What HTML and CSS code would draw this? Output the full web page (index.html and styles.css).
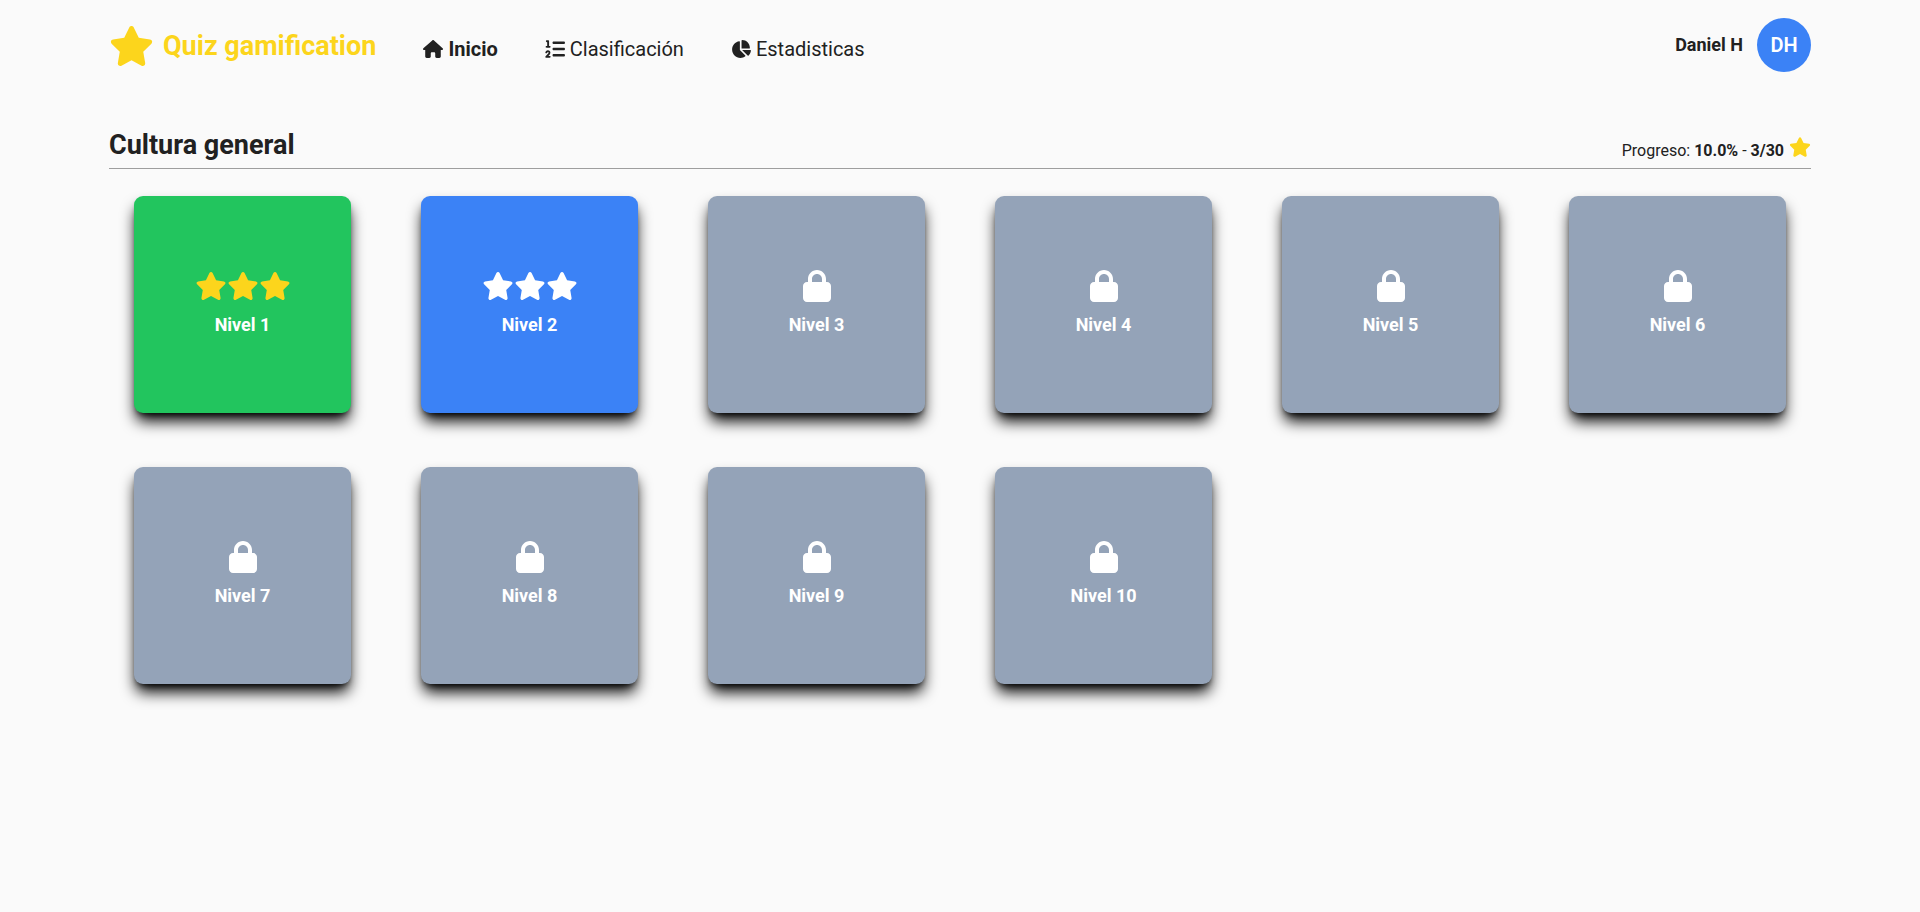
FILE: index.html
```html
<!DOCTYPE html>
<html lang="es">
<head>
  <meta charset="UTF-8">
  <meta name="viewport" content="width=device-width, initial-scale=1.0">
  <title>Quiz gamification</title>
  <link rel="stylesheet" href="styles.css">
</head>
<body>
  <!-- Shared icons -->
  <svg class="sprite" aria-hidden="true">
    <symbol id="star" viewBox="0 0 576 512">
      <path d="M316.9 18C311.6 7 300.4 0 288.100 0s-23.400 7-28.800 18L195 150.300 51.400 171.500c-12 1.800-22 10.200-25.700 21.700s-.700 24.200 7.900 32.700L137.800 329 113.200 474.700c-2 12 3 24.200 12.900 31.300s23 8 33.800 2.300l128.300-68.500 128.300 68.500c10.800 5.700 23.900 4.900 33.800-2.300s14.900-19.300 12.900-31.300L438.500 329 542.700 225.900c8.600-8.500 11.700-21.200 7.900-32.700s-13.700-19.900-25.700-21.700L381.200 150.300 316.900 18z"/>
    </symbol>
    <symbol id="lock" viewBox="0 0 448 512">
      <path d="M144 144v48H304V144c0-44.200-35.800-80-80-80s-80 35.800-80 80zM80 192V144C80 64.500 144.500 0 224 0s144 64.500 144 144v48h16c35.300 0 64 28.700 64 64V448c0 35.300-28.700 64-64 64H64c-35.300 0-64-28.700-64-64V256c0-35.300 28.700-64 64-64H80z"/>
    </symbol>
  </svg>

  <header class="navbar">
    <a href="#" class="brand">
      <svg class="brand-icon" aria-hidden="true"><use href="#star"/></svg>
      <span>Quiz gamification</span>
    </a>
    <nav class="menu">
      <a href="#" class="menu-link active">
        <svg class="menu-icon" viewBox="0 0 576 512" aria-hidden="true"><path d="M575.800 255.500c0 18-15 32.100-32 32.100h-32l.700 160.200c0 2.700-.2 5.400-.5 8.100V472c0 22.100-17.900 40-40 40H456c-1.100 0-2.200 0-3.300-.1c-1.400 .1-2.800 .1-4.200 .1H392c-22.100 0-40-17.900-40-40V384c0-17.700-14.300-32-32-32H256c-17.700 0-32 14.300-32 32v88c0 22.100-17.900 40-40 40H104c-22.100 0-40-17.900-40-40V287.600H32c-18 0-32-14-32-32.100c0-9 3-17 10-24L266.400 8c7-7 15-8 22-8s15 2 21 7L564.800 231.500c8 7 12 15 11 24z"/></svg>
        Inicio
      </a>
      <a href="#" class="menu-link">
        <svg class="menu-icon" viewBox="0 0 512 512" aria-hidden="true"><path d="M24 56c0-13.300 10.700-24 24-24H80c13.300 0 24 10.700 24 24V176h16c13.300 0 24 10.700 24 24s-10.700 24-24 24H40c-13.300 0-24-10.700-24-24s10.700-24 24-24H56V80H48C34.700 80 24 69.300 24 56zM86.700 341.200c-6.500-7.400-18.300-6.900-24 1.200L51.500 357.900c-7.700 10.800-22.700 13.300-33.500 5.600s-13.300-22.700-5.600-33.500l11.100-15.600c23.700-33.200 72.300-35.600 99.200-4.900c21.300 24.400 20.800 60.900-1.100 84.700L86.800 432H120c13.300 0 24 10.700 24 24s-10.700 24-24 24H32c-9.500 0-18.200-5.600-22-14.400s-2.100-18.900 4.300-25.900l72-78c5.300-5.800 5.400-14.600 .3-20.500zM224 64H480c17.700 0 32 14.300 32 32s-14.300 32-32 32H224c-17.700 0-32-14.300-32-32s14.300-32 32-32zm0 160H480c17.700 0 32 14.300 32 32s-14.300 32-32 32H224c-17.700 0-32-14.300-32-32s14.300-32 32-32zm0 160H480c17.700 0 32 14.300 32 32s-14.300 32-32 32H224c-17.700 0-32-14.300-32-32s14.300-32 32-32z"/></svg>
        Clasificación
      </a>
      <a href="#" class="menu-link">
        <svg class="menu-icon" viewBox="0 0 576 512" aria-hidden="true"><path d="M304 240V16.600c0-9 7-16.600 16-16.600C443.700 0 544 100.300 544 224c0 9-7.600 16-16.600 16H304zM32 272C32 150.700 122.100 50.300 239 34.300c9.200-1.300 17 6.100 17 15.400V288L412.500 444.500c6.700 6.700 6.200 17.700-1.500 23.100C371.800 495.600 323.800 512 272 512C139.500 512 32 404.600 32 272zm526.400 16c9.300 0 16.600 7.800 15.400 17c-7.700 55.900-34.600 105.600-73.900 142.300c-6 5.600-15.400 5.200-21.200-.7L320 288H558.400z"/></svg>
        Estadisticas
      </a>
    </nav>
    <div class="user">
      <span class="user-name">Daniel H</span>
      <span class="avatar">DH</span>
    </div>
  </header>

  <main class="content">
    <div class="category-header">
      <h1>Cultura general</h1>
      <p class="progress">
        <span>Progreso: <b>10.0%</b> - <b>3/30</b></span>
        <svg class="progress-icon" aria-hidden="true"><use href="#star"/></svg>
      </p>
    </div>

    <div class="levels">
      <button type="button" class="level completed">
        <span class="stars">
          <svg class="star"><use href="#star"/></svg>
          <svg class="star"><use href="#star"/></svg>
          <svg class="star"><use href="#star"/></svg>
        </span>
        <span>Nivel 1</span>
      </button>
      <button type="button" class="level current">
        <span class="stars">
          <svg class="star"><use href="#star"/></svg>
          <svg class="star"><use href="#star"/></svg>
          <svg class="star"><use href="#star"/></svg>
        </span>
        <span>Nivel 2</span>
      </button>
      <button type="button" class="level">
        <svg class="lock"><use href="#lock"/></svg>
        <span>Nivel 3</span>
      </button>
      <button type="button" class="level">
        <svg class="lock"><use href="#lock"/></svg>
        <span>Nivel 4</span>
      </button>
      <button type="button" class="level">
        <svg class="lock"><use href="#lock"/></svg>
        <span>Nivel 5</span>
      </button>
      <button type="button" class="level">
        <svg class="lock"><use href="#lock"/></svg>
        <span>Nivel 6</span>
      </button>
      <button type="button" class="level">
        <svg class="lock"><use href="#lock"/></svg>
        <span>Nivel 7</span>
      </button>
      <button type="button" class="level">
        <svg class="lock"><use href="#lock"/></svg>
        <span>Nivel 8</span>
      </button>
      <button type="button" class="level">
        <svg class="lock"><use href="#lock"/></svg>
        <span>Nivel 9</span>
      </button>
      <button type="button" class="level">
        <svg class="lock"><use href="#lock"/></svg>
        <span>Nivel 10</span>
      </button>
    </div>
  </main>
</body>
</html>
```
FILE: styles.css
```css
* {
  box-sizing: border-box;
}
body {
  margin: 0;
  padding: 0 109px;
  font-family: Roboto, sans-serif;
  background: #fafafa;
  color: #212121;
}
svg {
  fill: currentColor;
}
.sprite {
  display: none;
}

/* Navbar */
.navbar {
  display: flex;
  align-items: center;
  height: 90px;
}
.brand {
  display: flex;
  align-items: center;
  gap: 9px;
  padding-top: 2px;
  color: #fcd51c;
  font-size: 27px;
  font-weight: bold;
  text-decoration: none;
}
.brand-icon {
  width: 45px;
  height: 40px;
}
.menu {
  display: flex;
  gap: 47px;
  margin-left: 47px;
  padding-top: 7px;
}
.menu-link {
  display: flex;
  align-items: center;
  gap: 5px;
  color: #212121;
  font-size: 20px;
  line-height: 24px;
  text-decoration: none;
}
.menu-link.active {
  font-weight: bold;
}
.menu-icon {
  width: 20px;
  height: 20px;
}
.user {
  display: flex;
  align-items: center;
  gap: 14px;
  margin-left: auto;
}
.user-name {
  font-size: 18px;
  font-weight: bold;
  line-height: 24px;
}
.avatar {
  display: flex;
  align-items: center;
  justify-content: center;
  width: 54px;
  height: 54px;
  border-radius: 50%;
  background: #3b82f6;
  color: white;
  font-size: 20px;
  font-weight: 600;
}

/* Category */
.category-header {
  display: flex;
  justify-content: space-between;
  align-items: flex-end;
  margin-top: 37px;
  padding-bottom: 5px;
  border-bottom: 1px solid #9e9e9e;
}
.category-header h1 {
  margin: 0;
  font-size: 27px;
  line-height: 36px;
}
.progress {
  display: flex;
  align-items: flex-end;
  gap: 5px;
  margin: 0;
  font-size: 16px;
  line-height: 24px;
}
.progress-icon {
  width: 22px;
  height: 20px;
  margin-bottom: 6px;
  color: #fcd51c;
}

/* Levels */
.levels {
  display: grid;
  grid-template-columns: repeat(6, 1fr);
  gap: 54px 70px;
  padding: 27px 25px;
}
.level {
  display: flex;
  flex-direction: column;
  align-items: center;
  justify-content: center;
  gap: 9px;
  aspect-ratio: 1;
  padding: 0 0 2px;
  border: none;
  border-radius: 9px;
  background: #94a3b8;
  box-shadow: 0 10px 15px -2px #000, 0 4px 6px -4px #000;
  color: white;
  font-family: inherit;
  font-size: 18px;
  font-weight: bold;
  line-height: 27px;
  cursor: pointer;
}
.level.completed {
  background: #22c55e;
}
.level.current {
  background: #3b82f6;
}
.stars {
  display: flex;
  align-items: center;
  height: 32px;
}
.star {
  width: 32px;
  height: 28px;
}
.completed .star {
  color: #fcd51c;
}
.lock {
  width: 28px;
  height: 32px;
}
```
